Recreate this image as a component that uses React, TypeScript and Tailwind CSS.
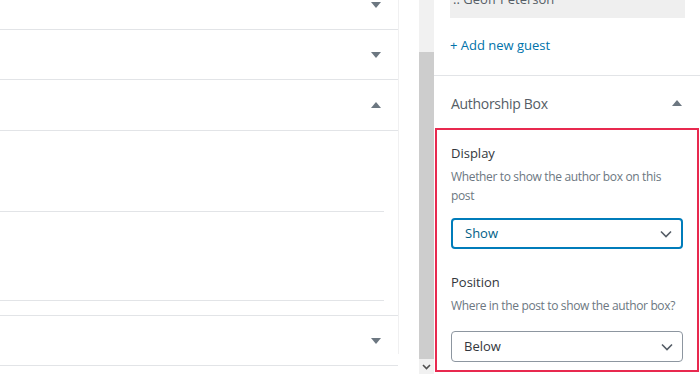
import React from 'react';

const font = { fontFamily: '"Open Sans", "Noto Sans", sans-serif' };

function Caret({ up = false }: { up?: boolean }) {
  return (
    <svg width="10" height="6" viewBox="0 0 10 6" className="shrink-0">
      {up ? <path d="M0 6 L5 0 L10 6 Z" fill="#6c7781" /> : <path d="M0 0 L10 0 L5 6 Z" fill="#6c7781" />}
    </svg>
  );
}

function Chevron() {
  return (
    <svg width="12" height="8" viewBox="0 0 12 8" className="shrink-0">
      <path d="M1 1.5 L6 6.5 L11 1.5" fill="none" stroke="#555d66" strokeWidth="1.6" />
    </svg>
  );
}

function PanelRow({ up = false, className = '' }: { up?: boolean; className?: string }) {
  return (
    <div className={`flex h-[50px] items-center justify-end border-b border-[#e2e4e7] pr-[17px] ${className}`}>
      <Caret up={up} />
    </div>
  );
}

interface SelectProps {
  value: string;
  active?: boolean;
}

function Select({ value, active }: SelectProps) {
  return (
    <div
      className={`flex h-[31px] items-center justify-between rounded-[4px] pl-[12px] pr-[9px] text-[13px] ${
        active ? 'border-2 border-[#007cba] text-[#016087]' : 'border border-[#8d96a0] text-[#32373c]'
      }`}
    >
      <span>{value}</span>
      <Chevron />
    </div>
  );
}

export default function App() {
  return (
    <div className="flex h-[374px] w-[700px] overflow-hidden bg-white" style={font}>
      {/* editor panels */}
      <div className="w-[419px] shrink-0 pr-[20px]">
        <div className="h-full border-r border-[#f0f0f1]">
          <PanelRow className="-mt-[20px]" />
          <PanelRow />
          <PanelRow up className="h-[51px]" />
          <div className="border-b border-[#e2e4e7] pr-[14px]">
            <div className="h-[81px] border-b border-[#e2e4e7]" />
            <div className="h-[89px] border-b border-[#e2e4e7]" />
            <div className="h-[14px]" />
          </div>
          <PanelRow />
        </div>
      </div>

      {/* scrollbar */}
      <div className="flex w-[15px] shrink-0 flex-col bg-[#f1f1f1]">
        <div className="h-[52px]" />
        <div className="flex-1 bg-[#cdcdcd]" />
        <div className="flex h-[15px] items-center justify-center">
          <svg width="9" height="6" viewBox="0 0 9 6">
            <path d="M1 1 L4.5 4.5 L8 1" fill="none" stroke="#505050" strokeWidth="1.6" />
          </svg>
        </div>
      </div>

      {/* sidebar */}
      <div className="flex-1">
        <div className="border-b border-[#e2e4e7] px-[16px] pr-[15px]">
          <div className="-mt-[18px] flex h-[36px] items-center bg-[#efefef] pl-[3px] text-[13px] text-[#555d66]">
            :: Geoff Peterson
          </div>
          <div className="flex h-[57px] items-center pb-[2px] text-[13px] text-[#0073aa]">+ Add new guest</div>
        </div>
        <div className="flex h-[52px] items-center justify-between pl-[17px] pr-[18px] pt-[2px]">
          <span className="text-[14px] tracking-[-0.3px] text-[#555d66]">Authorship Box</span>
          <Caret up />
        </div>
        <div className="mx-[1px] h-[244px] border-2 border-[#e8294f] px-[14px] pt-[13px]">
          <div className="text-[13px] leading-[20px] text-[#32373c]">Display</div>
          <div className="mt-[4px] max-w-[222px] text-[12px] leading-[19px] tracking-[-0.35px] text-[#6c7781]">
            Whether to show the author box on this post
          </div>
          <div className="mt-[13px]">
            <Select value="Show" active />
          </div>
          <div className="mt-[23px] text-[13px] leading-[20px] text-[#32373c]">Position</div>
          <div className="mt-[4px] whitespace-nowrap text-[12px] leading-[19px] tracking-[-0.35px] text-[#6c7781]">
            Where in the post to show the author box?
          </div>
          <div className="mt-[16px]">
            <Select value="Below" />
          </div>
        </div>
      </div>
    </div>
  );
}
